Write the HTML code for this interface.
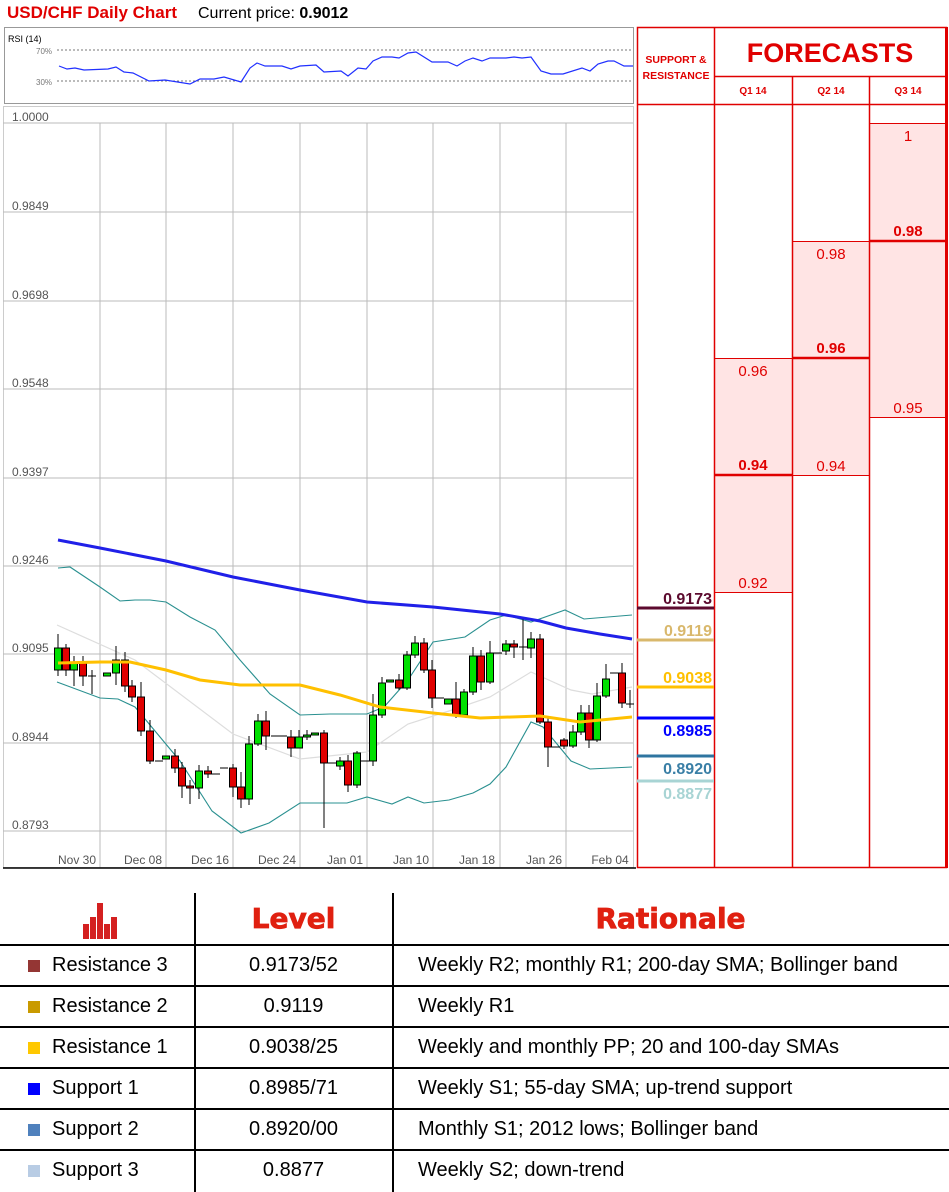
<!DOCTYPE html>
<html><head><meta charset="utf-8"><style>
body{margin:0;width:949px;height:1192px;background:#fff;overflow:hidden;font-family:"Liberation Sans",sans-serif;position:relative}
svg text{font-family:"Liberation Sans",sans-serif}
.row{position:absolute;left:0;width:949px;height:41px;font-size:20px;color:#000}
.row div{position:absolute;top:0;line-height:41px}
.sq{position:absolute;width:12px;height:12px;top:15px;left:28px}
.hl{position:absolute;left:0;width:949px;height:1.5px;background:#000}
</style></head><body>
<svg width="949" height="870" style="position:absolute;left:0;top:0" xmlns="http://www.w3.org/2000/svg">
<text x="7" y="18" font-size="17" font-weight="bold" fill="#e00000">USD/CHF Daily Chart</text>
<text x="198" y="18" font-size="16" fill="#000">Current price: <tspan font-weight="bold">0.9012</tspan></text>
<rect x="4.5" y="27.5" width="629" height="76" fill="#fff" stroke="#999"/>
<text x="8" y="42" font-size="9" fill="#000">RSI (14)</text>
<text x="36" y="54" font-size="8" fill="#777">70%</text>
<text x="36" y="85" font-size="8" fill="#777">30%</text>
<line x1="57" y1="50" x2="633" y2="50" stroke="#777" stroke-dasharray="2,2"/>
<line x1="57" y1="81" x2="633" y2="81" stroke="#777" stroke-dasharray="2,2"/>
<polyline fill="none" stroke="#2030ff" stroke-width="1.2" points="59,66 67,69 75,68 84,70 108,69 116,67 124,72 133,73 149,81 165,80 190,84 200,79 214,79 224,77 241,82 250,68 257,63 265,66 282,66 291,69 300,66 316,65 324,72 341,71 348,76 358,68 366,69 373,61 382,57 392,57 399,58 408,53 416,52 432,62 448,62 457,66 465,61 473,58 482,61 490,58 506,58 514,57 522,58 531,57 541,71 551,74 563,74 582,68 590,71 598,64 608,61 614,61 624,66 633,66"/>
<rect x="3.5" y="106.5" width="630" height="761" fill="#fff" stroke="#ccc"/>
<g stroke="#bbb" stroke-width="1">
<line x1="3" y1="123" x2="633" y2="123"/><line x1="3" y1="212" x2="633" y2="212"/><line x1="3" y1="301" x2="633" y2="301"/><line x1="3" y1="389" x2="633" y2="389"/><line x1="3" y1="478" x2="633" y2="478"/><line x1="3" y1="566" x2="633" y2="566"/><line x1="3" y1="654" x2="633" y2="654"/><line x1="3" y1="743" x2="633" y2="743"/><line x1="3" y1="831" x2="633" y2="831"/>
<line x1="100" y1="123" x2="100" y2="868"/><line x1="166" y1="123" x2="166" y2="868"/><line x1="233" y1="123" x2="233" y2="868"/><line x1="300" y1="123" x2="300" y2="868"/><line x1="367" y1="123" x2="367" y2="868"/><line x1="433" y1="123" x2="433" y2="868"/><line x1="500" y1="123" x2="500" y2="868"/><line x1="566" y1="123" x2="566" y2="868"/>
</g>
<line x1="3" y1="868" x2="636" y2="868" stroke="#000" stroke-width="1.5"/>
<g font-size="12" fill="#555">
<text x="12" y="121">1.0000</text><text x="12" y="210">0.9849</text><text x="12" y="299">0.9698</text><text x="12" y="387">0.9548</text><text x="12" y="476">0.9397</text><text x="12" y="564">0.9246</text><text x="12" y="652">0.9095</text><text x="12" y="741">0.8944</text><text x="12" y="829">0.8793</text>
</g>
<g font-size="12" fill="#555" text-anchor="middle">
<text x="77" y="864">Nov 30</text><text x="143" y="864">Dec 08</text><text x="210" y="864">Dec 16</text><text x="277" y="864">Dec 24</text><text x="345" y="864">Jan 01</text><text x="411" y="864">Jan 10</text><text x="477" y="864">Jan 18</text><text x="544" y="864">Jan 26</text><text x="610" y="864">Feb 04</text>
</g>
<polyline fill="none" stroke="#ddd" stroke-width="1.2" points="57,625 135,660 233,734 300,759 367,752 408,724 449,711 490,697 531,672 571,690 592,694 632,687"/>
<polyline fill="none" stroke="#2a9090" stroke-width="1.1" points="58,568 70,567 100,587 120,601 135,600 150,600 166,602 190,617 215,630 240,660 270,694 300,715 330,714 367,714 384,707 408,680 433,642 465,637 490,620 506,615 531,622 565,610 584,619 632,615"/>
<polyline fill="none" stroke="#2a9090" stroke-width="1.1" points="57,682 100,698 118,699 135,707 180,761 212,811 241,833 269,823 300,803 347,803 367,797 392,804 408,797 424,803 449,800 473,793 490,784 506,767 531,722 543,727 571,761 590,769 632,767"/>
<g stroke="#000" stroke-width="1">
<line x1="58" y1="634" x2="58" y2="676"/><rect x="54.5" y="648" width="7" height="22" fill="#00e000"/>
<line x1="66" y1="644" x2="66" y2="676"/><rect x="62.5" y="648" width="7" height="22" fill="#e00000"/>
<line x1="74" y1="656" x2="74" y2="686"/><rect x="70.5" y="662" width="7" height="8" fill="#00e000"/>
<line x1="83" y1="656" x2="83" y2="686"/><rect x="79.5" y="662" width="7" height="14" fill="#e00000"/>
<line x1="92" y1="670" x2="92" y2="694"/><line x1="88" y1="676" x2="96" y2="676"/>
<rect x="103.5" y="673" width="7" height="3" fill="#00e000"/>
<line x1="116" y1="646" x2="116" y2="685"/><rect x="112.5" y="660" width="7" height="13" fill="#00e000"/>
<line x1="125" y1="652" x2="125" y2="692"/><rect x="121.5" y="660" width="7" height="26" fill="#e00000"/>
<line x1="132" y1="680" x2="132" y2="702"/><rect x="128.5" y="686" width="7" height="11" fill="#e00000"/>
<line x1="141" y1="682" x2="141" y2="736"/><rect x="137.5" y="697" width="7" height="34" fill="#e00000"/>
<line x1="150" y1="720" x2="150" y2="764"/><rect x="146.5" y="731" width="7" height="30" fill="#e00000"/>
<line x1="155" y1="761" x2="163" y2="761"/>
<rect x="162.5" y="756" width="7" height="3" fill="#00e000"/>
<line x1="175" y1="749" x2="175" y2="773"/><rect x="171.5" y="756" width="7" height="12" fill="#e00000"/>
<line x1="182" y1="762" x2="182" y2="798"/><rect x="178.5" y="768" width="7" height="18" fill="#e00000"/>
<line x1="190" y1="780" x2="190" y2="804"/><rect x="186.5" y="786" width="7" height="2" fill="#e00000"/>
<line x1="199" y1="765" x2="199" y2="799"/><rect x="195.5" y="771" width="7" height="17" fill="#00e000"/>
<line x1="208" y1="766" x2="208" y2="778"/><rect x="204.5" y="771" width="7" height="3" fill="#e00000"/>
<line x1="212" y1="774" x2="220" y2="774"/>
<line x1="220" y1="768" x2="228" y2="768"/>
<line x1="233" y1="764" x2="233" y2="797"/><rect x="229.5" y="768" width="7" height="19" fill="#e00000"/>
<line x1="241" y1="772" x2="241" y2="808"/><rect x="237.5" y="787" width="7" height="12" fill="#e00000"/>
<line x1="249" y1="736" x2="249" y2="805"/><rect x="245.5" y="744" width="7" height="55" fill="#00e000"/>
<line x1="258" y1="714" x2="258" y2="746"/><rect x="254.5" y="721" width="7" height="23" fill="#00e000"/>
<line x1="266" y1="711" x2="266" y2="750"/><rect x="262.5" y="721" width="7" height="15" fill="#e00000"/>
<line x1="271" y1="736" x2="279" y2="736"/>
<line x1="279" y1="736" x2="287" y2="736"/>
<line x1="291" y1="730" x2="291" y2="757"/><rect x="287.5" y="737" width="7" height="11" fill="#e00000"/>
<line x1="299" y1="730" x2="299" y2="748"/><rect x="295.5" y="737" width="7" height="11" fill="#00e000"/>
<line x1="307" y1="730" x2="307" y2="740"/><rect x="303.5" y="735" width="7" height="2" fill="#00e000"/>
<rect x="311.5" y="733" width="7" height="2" fill="#00e000"/>
<line x1="324" y1="730" x2="324" y2="828"/><rect x="320.5" y="733" width="7" height="30" fill="#e00000"/>
<line x1="328" y1="763" x2="336" y2="763"/>
<line x1="340" y1="757" x2="340" y2="770"/><rect x="336.5" y="761" width="7" height="5" fill="#00e000"/>
<line x1="348" y1="755" x2="348" y2="792"/><rect x="344.5" y="761" width="7" height="24" fill="#e00000"/>
<line x1="357" y1="751" x2="357" y2="788"/><rect x="353.5" y="753" width="7" height="32" fill="#00e000"/>
<line x1="361" y1="761" x2="369" y2="761"/>
<line x1="373" y1="694" x2="373" y2="766"/><rect x="369.5" y="715" width="7" height="46" fill="#00e000"/>
<line x1="382" y1="677" x2="382" y2="718"/><rect x="378.5" y="683" width="7" height="32" fill="#00e000"/>
<rect x="386.5" y="680" width="7" height="2" fill="#00e000"/>
<line x1="399" y1="674" x2="399" y2="690"/><rect x="395.5" y="680" width="7" height="8" fill="#e00000"/>
<line x1="407" y1="651" x2="407" y2="690"/><rect x="403.5" y="655" width="7" height="33" fill="#00e000"/>
<line x1="415" y1="636" x2="415" y2="658"/><rect x="411.5" y="643" width="7" height="12" fill="#00e000"/>
<line x1="424" y1="638" x2="424" y2="673"/><rect x="420.5" y="643" width="7" height="27" fill="#e00000"/>
<line x1="432" y1="660" x2="432" y2="708"/><rect x="428.5" y="670" width="7" height="28" fill="#e00000"/>
<line x1="436" y1="698" x2="444" y2="698"/>
<rect x="444.5" y="699" width="7" height="5" fill="#00e000"/>
<line x1="456" y1="682" x2="456" y2="718"/><rect x="452.5" y="699" width="7" height="16" fill="#e00000"/>
<line x1="464" y1="689" x2="464" y2="716"/><rect x="460.5" y="692" width="7" height="23" fill="#00e000"/>
<line x1="473" y1="647" x2="473" y2="695"/><rect x="469.5" y="656" width="7" height="36" fill="#00e000"/>
<line x1="481" y1="650" x2="481" y2="690"/><rect x="477.5" y="656" width="7" height="26" fill="#e00000"/>
<line x1="490" y1="641" x2="490" y2="684"/><rect x="486.5" y="653" width="7" height="29" fill="#00e000"/>
<line x1="494" y1="653" x2="502" y2="653"/>
<line x1="506" y1="640" x2="506" y2="655"/><rect x="502.5" y="644" width="7" height="7" fill="#00e000"/>
<line x1="514" y1="640" x2="514" y2="658"/><rect x="510.5" y="644" width="7" height="3" fill="#e00000"/>
<line x1="523" y1="619" x2="523" y2="660"/><line x1="519" y1="647" x2="527" y2="647"/>
<line x1="531" y1="632" x2="531" y2="658"/><rect x="527.5" y="639" width="7" height="9" fill="#00e000"/>
<line x1="540" y1="634" x2="540" y2="724"/><rect x="536.5" y="639" width="7" height="83" fill="#e00000"/>
<line x1="548" y1="716" x2="548" y2="767"/><rect x="544.5" y="722" width="7" height="25" fill="#e00000"/>
<line x1="552" y1="747" x2="560" y2="747"/>
<line x1="564" y1="738" x2="564" y2="749"/><rect x="560.5" y="740" width="7" height="6" fill="#e00000"/>
<line x1="573" y1="725" x2="573" y2="748"/><rect x="569.5" y="732" width="7" height="14" fill="#00e000"/>
<line x1="581" y1="705" x2="581" y2="735"/><rect x="577.5" y="713" width="7" height="19" fill="#00e000"/>
<line x1="589" y1="705" x2="589" y2="748"/><rect x="585.5" y="713" width="7" height="27" fill="#e00000"/>
<line x1="597" y1="683" x2="597" y2="742"/><rect x="593.5" y="696" width="7" height="44" fill="#00e000"/>
<line x1="606" y1="664" x2="606" y2="698"/><rect x="602.5" y="679" width="7" height="17" fill="#00e000"/>
<line x1="610" y1="673" x2="618" y2="673"/>
<line x1="622" y1="663" x2="622" y2="708"/><rect x="618.5" y="673" width="7" height="30" fill="#e00000"/>
<line x1="630" y1="690" x2="630" y2="708"/><line x1="626" y1="704" x2="634" y2="704"/>
</g>
<polyline fill="none" stroke="#ffc000" stroke-width="3" points="58,663 100,662 130,662 166,670 200,680 240,685 300,685 340,695 380,707 433,713 480,718 540,716 580,722 632,717"/>
<polyline fill="none" stroke="#2020e8" stroke-width="3" points="58,540 100,548 166,561 233,577 300,590 367,602 433,607 500,614 540,621 566,628 600,634 632,639"/>
<g fill="#ffe4e4" stroke="#e00000" stroke-width="1">
<rect x="714.5" y="358.5" width="78" height="234"/>
<rect x="792.5" y="241.5" width="77" height="234"/>
<rect x="869.5" y="123.5" width="77" height="294"/>
</g>
<g stroke="#e00000" stroke-width="1.5" fill="none">
<rect x="637.5" y="27.5" width="309" height="840"/>
<line x1="714.5" y1="27" x2="714.5" y2="868"/>
<line x1="792.5" y1="76" x2="792.5" y2="868"/>
<line x1="869.5" y1="76" x2="869.5" y2="868"/>
<line x1="714" y1="76.5" x2="947" y2="76.5"/>
<line x1="637" y1="104.5" x2="947" y2="104.5"/>
</g>
<line x1="946.5" y1="27" x2="946.5" y2="868" stroke="#e00000" stroke-width="3"/>
<g stroke="#e00000" stroke-width="2.5">
<line x1="714" y1="475" x2="792" y2="475"/><line x1="792" y1="358" x2="870" y2="358"/><line x1="869" y1="241" x2="947" y2="241"/>
</g>
<g fill="#e00000" text-anchor="middle">
<text x="676" y="63" font-size="10.5" font-weight="bold">SUPPORT &amp;</text>
<text x="676" y="79" font-size="10.5" font-weight="bold">RESISTANCE</text>
<text x="830" y="62" font-size="27" font-weight="bold">FORECASTS</text>
<text x="753" y="94" font-size="10" font-weight="bold">Q1 14</text>
<text x="831" y="94" font-size="10" font-weight="bold">Q2 14</text>
<text x="908" y="94" font-size="10" font-weight="bold">Q3 14</text>
<g font-size="15">
<text x="908" y="141">1</text><text x="908" y="236" font-weight="bold">0.98</text><text x="908" y="413">0.95</text>
<text x="831" y="259">0.98</text><text x="831" y="353" font-weight="bold">0.96</text><text x="831" y="471">0.94</text>
<text x="753" y="376">0.96</text><text x="753" y="470" font-weight="bold">0.94</text><text x="753" y="588">0.92</text>
</g>
</g>
<g font-size="16" font-weight="bold" text-anchor="end">
<line x1="637" y1="608" x2="714" y2="608" stroke="#5c0a2e" stroke-width="3"/><text x="712" y="604" fill="#5c0a2e">0.9173</text>
<line x1="637" y1="640" x2="714" y2="640" stroke="#d9b86c" stroke-width="3"/><text x="712" y="636" fill="#d9b86c">0.9119</text>
<line x1="637" y1="687" x2="714" y2="687" stroke="#ffc000" stroke-width="3"/><text x="712" y="683" fill="#ffc000">0.9038</text>
<line x1="637" y1="718" x2="714" y2="718" stroke="#0000ff" stroke-width="3"/><text x="712" y="736" fill="#0000ff">0.8985</text>
<line x1="637" y1="756" x2="714" y2="756" stroke="#2e75a0" stroke-width="3"/><text x="712" y="774" fill="#3a7fa6">0.8920</text>
<line x1="637" y1="781" x2="714" y2="781" stroke="#a8d4d4" stroke-width="3"/><text x="712" y="799" fill="#a8d4d4">0.8877</text>
</g>
</svg>

<div style="position:absolute;left:194px;top:893px;width:1.5px;height:299px;background:#000"></div>
<div style="position:absolute;left:392px;top:893px;width:1.5px;height:299px;background:#000"></div>
<svg width="40" height="40" style="position:absolute;left:81px;top:900px"><g fill="#d42020"><rect x="2" y="24" width="6" height="15"/><rect x="9" y="17" width="6" height="22"/><rect x="16" y="3" width="6" height="36"/><rect x="23" y="24" width="6" height="15"/><rect x="30" y="17" width="6" height="22"/></g></svg>
<div style="position:absolute;left:194px;width:199px;top:902px;text-align:center;font-size:28px;font-weight:900;color:#e02010;font-family:'DejaVu Sans',sans-serif;-webkit-text-stroke:0.8px #e02010">Level</div>
<div style="position:absolute;left:392px;width:557px;top:902px;text-align:center;font-size:28px;font-weight:900;color:#e02010;font-family:'DejaVu Sans',sans-serif;-webkit-text-stroke:0.8px #e02010">Rationale</div>
<div class="hl" style="top:944px"></div>
<div class="hl" style="top:985px"></div>
<div class="hl" style="top:1026px"></div>
<div class="hl" style="top:1067px"></div>
<div class="hl" style="top:1108px"></div>
<div class="hl" style="top:1149px"></div>
<div class="row" style="top:945px"><span class="sq" style="background:#943634"></span><div style="left:52px">Resistance 3</div><div style="left:194px;width:199px;text-align:center">0.9173/52</div><div style="left:418px">Weekly R2; monthly R1; 200-day SMA; Bollinger band</div></div>
<div class="row" style="top:986px"><span class="sq" style="background:#c99a00"></span><div style="left:52px">Resistance 2</div><div style="left:194px;width:199px;text-align:center">0.9119</div><div style="left:418px">Weekly R1</div></div>
<div class="row" style="top:1027px"><span class="sq" style="background:#ffc800"></span><div style="left:52px">Resistance 1</div><div style="left:194px;width:199px;text-align:center">0.9038/25</div><div style="left:418px">Weekly and monthly PP; 20 and 100-day SMAs</div></div>
<div class="row" style="top:1068px"><span class="sq" style="background:#0000ff"></span><div style="left:52px">Support 1</div><div style="left:194px;width:199px;text-align:center">0.8985/71</div><div style="left:418px">Weekly S1; 55-day SMA; up-trend support</div></div>
<div class="row" style="top:1109px"><span class="sq" style="background:#4f81bd"></span><div style="left:52px">Support 2</div><div style="left:194px;width:199px;text-align:center">0.8920/00</div><div style="left:418px">Monthly S1; 2012 lows; Bollinger band</div></div>
<div class="row" style="top:1150px"><span class="sq" style="background:#b8cce4"></span><div style="left:52px">Support 3</div><div style="left:194px;width:199px;text-align:center">0.8877</div><div style="left:418px">Weekly S2; down-trend</div></div>
</body></html>
